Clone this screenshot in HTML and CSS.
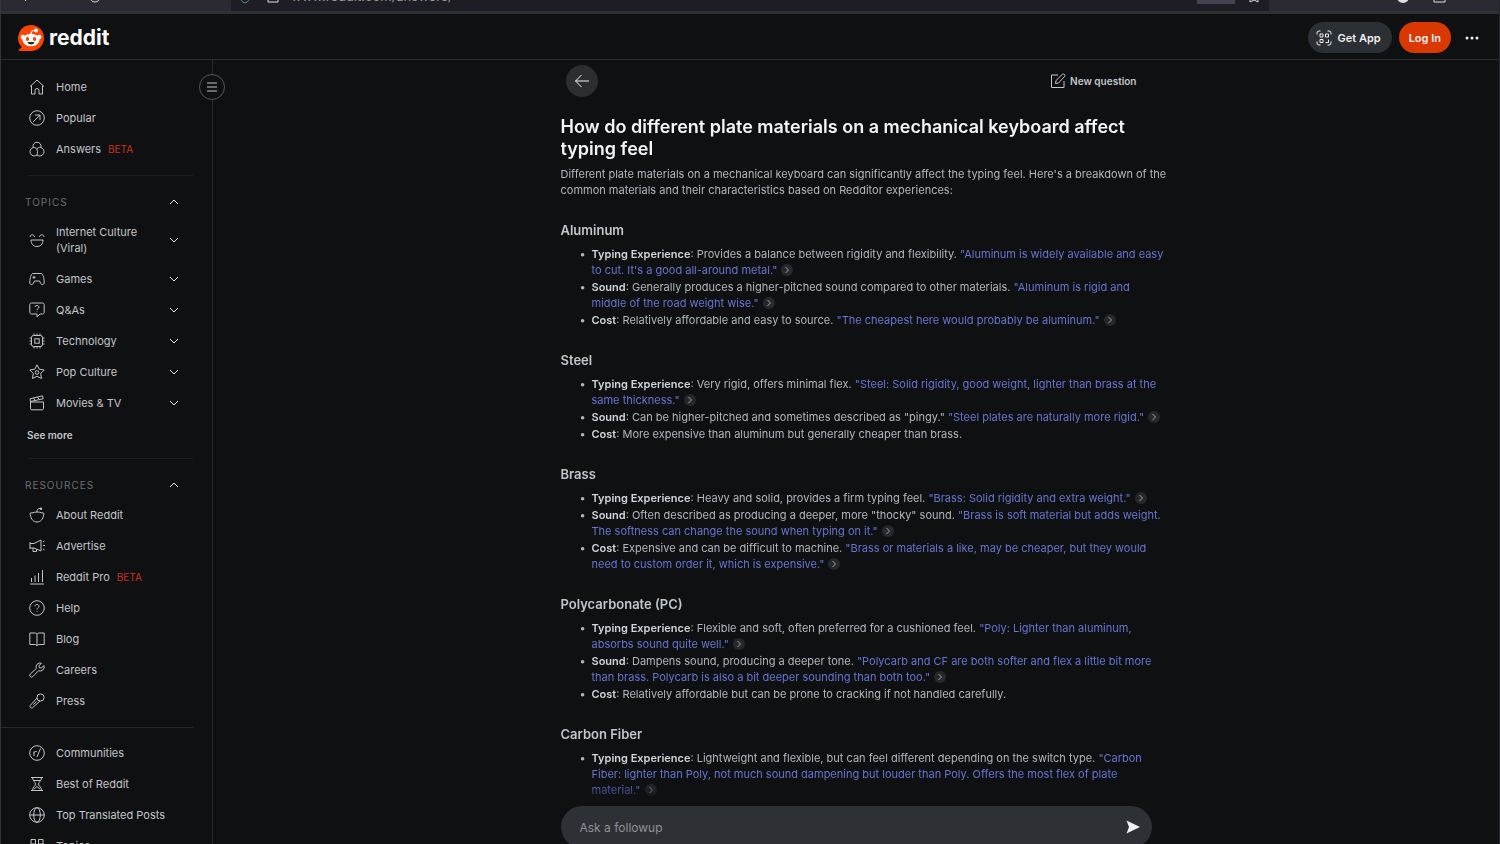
FILE: index.html
```html
<!DOCTYPE html>
<html lang="en">
<head>
    <meta charset="UTF-8">
    <meta name="viewport" content="width=device-width, initial-scale=1.0">
    <title>Reddit Answers</title>
    <link rel="stylesheet" href="styles.css">
</head>
<body>

<!-- Shared icons -->
<svg class="sprite" aria-hidden="true">
    <symbol id="down" viewBox="0 0 12 12"><path d="M2 4l4 4 4-4"/></symbol>
    <symbol id="up" viewBox="0 0 12 12"><path d="M2 8l4-4 4 4"/></symbol>
    <symbol id="next" viewBox="0 0 12 12"><path d="M4.500 3l3 3-3 3"/></symbol>
</svg>

<div class="browser-bar">
    <svg class="browser-icons" viewBox="0 0 110 14" aria-hidden="true">
        <path d="M15-3l4 4M83-3a5 5 0 0 0 10 0"/>
    </svg>
    <div class="address">
        <svg class="address-icons" viewBox="0 0 46 14" aria-hidden="true">
            <path class="shield" d="M5-4c0 4 2 6 5 7 3-1 5-3 5-7"/>
            <path d="M33-4v6h10v-6"/>
        </svg>
        <span class="url">www.reddit.com/answers/</span>
        <span class="zoom-level"></span>
        <svg class="star" viewBox="0 0 14 14" aria-hidden="true"><path d="M3-3v5l4-2 4 2v-5"/></svg>
    </div>
    <svg class="browser-icons browser-icons-right" viewBox="0 0 110 14" aria-hidden="true">
        <circle class="solid" cx="14" cy="-3" r="6"/>
        <path d="M45-4v6h11v-6"/>
    </svg>
</div>

<header class="header">
    <a class="logo" href="#">
        <svg class="logo-mark" viewBox="0 0 26 26" aria-hidden="true">
            <path fill="#ff4500" d="M13 0a13 13 0 1 1 0 26H1.500c-.8 0-1.100-.8-.6-1.300L3.800 22A13 13 0 0 1 13 0z"/>
            <circle cx="4.800" cy="12" r="2.200" fill="#fff"/>
            <circle cx="21.200" cy="12" r="2.200" fill="#fff"/>
            <ellipse cx="13" cy="15" rx="8.500" ry="6.300" fill="#fff"/>
            <path d="M13 9c0-2.500 1.500-3.700 4.500-4" fill="none" stroke="#fff" stroke-width="1.200"/>
            <circle cx="18" cy="5.500" r="1.900" fill="#fff"/>
            <ellipse cx="9.500" cy="14" rx="1.700" ry="2" fill="#ff4500"/>
            <ellipse cx="16.500" cy="14" rx="1.700" ry="2" fill="#ff4500"/>
            <path d="M9.500 17.300c2.300-.5 4.700-.5 7 0-1 3-6 3-7 0z" fill="#222"/>
        </svg>
        <span>reddit</span>
    </a>
    <div class="header-actions">
        <button class="btn btn-app" type="button">
            <svg class="icon" viewBox="0 0 16 16" aria-hidden="true"><path d="M1 4.500V3a2 2 0 0 1 2-2h1.500M11.500 1H13a2 2 0 0 1 2 2v1.500M15 11.500V13a2 2 0 0 1-2 2h-1.500M4.500 15H3a2 2 0 0 1-2-2v-1.500M4 4h3v3H4zM9.500 4h3v3h-3zM4 9.500h3v3H4zM12.500 9.500v3h-3"/></svg>
            Get App
        </button>
        <button class="btn btn-login" type="button">Log In</button>
        <button class="btn-more" type="button" aria-label="More options">
            <svg class="icon" viewBox="0 0 16 16" aria-hidden="true"><g class="solid"><circle cx="3" cy="8" r="1.500"/><circle cx="8" cy="8" r="1.500"/><circle cx="13" cy="8" r="1.500"/></g></svg>
        </button>
    </div>
</header>

<div class="layout">
    <aside class="sidebar">
        <button class="toggle" type="button" aria-label="Collapse navigation">
            <svg class="icon" viewBox="0 0 16 16" aria-hidden="true"><path d="M3 4h10M3 8h10M3 12h10"/></svg>
        </button>
        <nav>
            <ul class="menu">
                <li><a href="#"><svg class="icon" viewBox="0 0 16 16"><path d="M1 7.500L8 1l7 6.500M2.500 6.500V15H6v-3.500a2 2 0 0 1 4 0V15h3.500V6.500"/></svg>Home</a></li>
                <li><a href="#"><svg class="icon" viewBox="0 0 16 16"><circle cx="8" cy="8" r="7.300"/><path d="M4 12l7-7M6 5h5v5"/></svg>Popular</a></li>
                <li><a href="#"><svg class="icon" viewBox="0 0 16 16"><path d="M4.200 6.500a4 4 0 1 1 7.600 0 4.300 4.300 0 1 1-3.800 7.500 4.300 4.300 0 1 1-3.800-7.500zM4.200 6.500C6.500 6 8.500 8 8.500 10.500c0 1.500 0 2.500-.5 3.500M11.800 6.500C10 6 8.500 7 8 8"/></svg>Answers <span class="beta">BETA</span></a></li>
            </ul>
            <hr>
            <button class="group" type="button">TOPICS <svg class="chevron"><use href="#up"/></svg></button>
            <ul class="menu">
                <li><a href="#"><svg class="icon" viewBox="0 0 16 16"><path d="M2 8h12c0 4-2.500 6.500-6 6.500S2 12 2 8zM1 5c.3-3 4-3 4.500 0M10.500 5c.5-3 4.200-3 4.500 0"/></svg><span class="label">Internet Culture (Viral)</span><svg class="chevron"><use href="#down"/></svg></a></li>
                <li><a href="#"><svg class="icon" viewBox="0 0 16 16"><path d="M4 2.500h8c2 0 3 4.500 3.200 8.500.1 3-2.500 3.500-3.700 1L10.500 10h-5L4.500 12C3.300 14.500.7 14 .8 11 1 7 2 2.500 4 2.500zM3.500 6.300h3M5 4.800v3M10.500 5.500v.1M11.500 7v.1"/></svg><span class="label">Games</span><svg class="chevron"><use href="#down"/></svg></a></li>
                <li><a href="#"><svg class="icon" viewBox="0 0 16 16"><path d="M2.500 1h11c1 0 1.700.7 1.700 1.700v7.600c0 1-.7 1.700-1.700 1.700H11l-3 3v-3H2.500C1.500 12 .8 11.300.8 10.300V2.700C.8 1.700 1.500 1 2.500 1zM6 5c0-2.200 4-2 4 .2C10 6.500 8 6.400 8 8M8 9.500v.7"/></svg><span class="label">Q&amp;As</span><svg class="chevron"><use href="#down"/></svg></a></li>
                <li><a href="#"><svg class="icon" viewBox="0 0 16 16"><rect x="2.500" y="2.500" width="11" height="11" rx="2"/><rect x="5.800" y="5.800" width="4.400" height="4.400"/><path d="M5 .5v2M8 .5v2M11 .5v2M5 13.500v2M8 13.500v2M11 13.500v2M.5 5h2M.5 8h2M.5 11h2M13.500 5h2M13.500 8h2M13.500 11h2"/></svg><span class="label">Technology</span><svg class="chevron"><use href="#down"/></svg></a></li>
                <li><a href="#"><svg class="icon" viewBox="0 0 16 16"><path d="M8 .8l2.200 4.400 5 .8-3.500 3.500.8 5L8 12.300l-4.500 2.200.8-5L.8 6l5-.8z"/><circle cx="8" cy="8.500" r="1.800"/></svg><span class="label">Pop Culture</span><svg class="chevron"><use href="#down"/></svg></a></li>
                <li><a href="#"><svg class="icon" viewBox="0 0 16 16"><path d="M1.500 7h13v6.500c0 .8-.5 1.300-1.300 1.300H2.800c-.8 0-1.300-.5-1.300-1.300zM1.500 7L1 3.800 13.500.8l.6 3L1.500 6.500M4.500 3l1.700 2.500M8.500 2l1.700 2.500"/></svg><span class="label">Movies &amp; TV</span><svg class="chevron"><use href="#down"/></svg></a></li>
            </ul>
            <button class="see-more" type="button">See more</button>
            <hr>
            <button class="group" type="button">RESOURCES <svg class="chevron"><use href="#up"/></svg></button>
            <ul class="menu">
                <li><a href="#"><svg class="icon" viewBox="0 0 16 16"><path d="M3 6c3-1.300 7-1.300 10 0 1.500-.8 2.700.8 1.600 2C14 12.500 11.500 15 8 15s-6-2.500-6.600-7C.3 6.800 1.500 5.200 3 6zM8 5c0-2.500.5-3.500 3.500-3.500"/><circle class="solid" cx="12" cy="1.700" r="1.200"/></svg>About Reddit</a></li>
                <li><a href="#"><svg class="icon" viewBox="0 0 16 16"><path d="M1 4v7M1 5.500h4L12 2v11L5 10H1M4 10v3.500h3.500V11M14 4l1.500-1M14 7.500h2M14 11l1.500 1"/></svg>Advertise</a></li>
                <li><a href="#"><svg class="icon" viewBox="0 0 16 16"><path d="M1 15h14M2.500 9v4M6 6.500V13M9.500 4v9M13.500 1v12"/></svg>Reddit Pro <span class="beta">BETA</span></a></li>
                <li><a href="#"><svg class="icon" viewBox="0 0 16 16"><circle cx="8" cy="8" r="7.300"/><path d="M6 6.300c0-2.700 4-2.300 4 0C10 7.700 8 7.600 8 9.500M8 11v.9"/></svg>Help</a></li>
                <li><a href="#"><svg class="icon" viewBox="0 0 16 16"><path d="M8 3.500C8 2.500 7 2 6 2H.8v11.500H6c1 0 2 .5 2 1.500 0-1 1-1.500 2-1.500h5.200V2H10c-1 0-2 .5-2 1.500zM8 3.500V15"/></svg>Blog</a></li>
                <li><a href="#"><svg class="icon" viewBox="0 0 16 16"><path d="M12.500 1.300a4 4 0 0 0-5.200 5.200L1.300 12a1.700 1.700 0 0 0 2.500 2.600l5.800-5.900a4 4 0 0 0 5.300-5.100L12.500 6l-2.300-.3L10 3.500z"/></svg>Careers</a></li>
                <li><a href="#"><svg class="icon" viewBox="0 0 16 16"><circle cx="11.500" cy="4.500" r="3.600"/><path d="M8 5L1.200 12.500c-1 1.200 1 3.200 2.300 2.300L11 8M8 6l2 2M7.500 8.500l-3 3"/></svg>Press</a></li>
            </ul>
            <hr class="wide">
            <ul class="menu">
                <li><a href="#"><svg class="icon" viewBox="0 0 16 16"><circle cx="8" cy="8" r="7.300"/><path d="M5 11V6.500M5 8c.3-1.300 1.300-1.800 2.800-1.500M8 12l3.500-8.500"/></svg>Communities</a></li>
                <li><a href="#"><svg class="icon" viewBox="0 0 16 16"><path d="M2 1.500h12M2 14.500h12M3.500 1.500C3.500 5 6.500 6 6.500 8s-3 3-3 6.500M12.500 1.500C12.500 5 9.500 6 9.500 8s3 3 3 6.500M5 4.500h6M5 13l3-2.500 3 2.500"/></svg>Best of Reddit</a></li>
                <li><a href="#"><svg class="icon" viewBox="0 0 16 16"><circle cx="8" cy="8" r="7.300"/><ellipse cx="8" cy="8" rx="3.300" ry="7.300"/><path d="M.7 8h14.600"/></svg>Top Translated Posts</a></li>
                <li><a href="#"><svg class="icon" viewBox="0 0 16 16"><path d="M2 1.500h4.500V6H2zM9.500 1.500H14V6H9.500zM2 9.500h4.500V14H2zM9.500 9.500H14V14H9.500z"/></svg>Topics</a></li>
            </ul>
        </nav>
    </aside>

    <main class="main">
        <div class="column">
            <div class="toolbar">
                <button class="back" type="button" aria-label="Back">
                    <svg class="icon" viewBox="0 0 16 16" aria-hidden="true"><path d="M15 8H1.500M7.500 2l-6 6 6 6"/></svg>
                </button>
                <button class="new-question" type="button">
                    <svg class="icon" viewBox="0 0 16 16" aria-hidden="true"><path d="M8 2H1.500v12.500H14V8M5.500 10.500l.5-3 6.500-6.300c1.300-1 3.200.8 2.200 2.200L8.500 10z"/></svg>
                    New question
                </button>
            </div>

            <article class="answer">
                <h1>How do different plate materials on a mechanical keyboard affect<br>typing feel</h1>
                <p>Different plate materials on a mechanical keyboard can significantly affect the typing feel. Here's a breakdown of the<br>common materials and their characteristics based on Redditor experiences:</p>

                <h2>Aluminum</h2>
                <ul>
                    <li><b>Typing Experience</b>: Provides a balance between rigidity and flexibility. <a href="#">"Aluminum is widely available and easy<br>to cut. It's a good all-around metal." <svg class="source"><use href="#next"/></svg></a></li>
                    <li><b>Sound</b>: Generally produces a higher-pitched sound compared to other materials. <a href="#">"Aluminum is rigid and<br>middle of the road weight wise." <svg class="source"><use href="#next"/></svg></a></li>
                    <li><b>Cost</b>: Relatively affordable and easy to source. <a href="#">"The cheapest here would probably be aluminum." <svg class="source"><use href="#next"/></svg></a></li>
                </ul>

                <h2>Steel</h2>
                <ul>
                    <li><b>Typing Experience</b>: Very rigid, offers minimal flex. <a href="#">"Steel: Solid rigidity, good weight, lighter than brass at the<br>same thickness." <svg class="source"><use href="#next"/></svg></a></li>
                    <li><b>Sound</b>: Can be higher-pitched and sometimes described as "pingy." <a href="#">"Steel plates are naturally more rigid." <svg class="source"><use href="#next"/></svg></a></li>
                    <li><b>Cost</b>: More expensive than aluminum but generally cheaper than brass.</li>
                </ul>

                <h2>Brass</h2>
                <ul>
                    <li><b>Typing Experience</b>: Heavy and solid, provides a firm typing feel. <a href="#">"Brass: Solid rigidity and extra weight." <svg class="source"><use href="#next"/></svg></a></li>
                    <li><b>Sound</b>: Often described as producing a deeper, more "thocky" sound. <a href="#">"Brass is soft material but adds weight.<br>The softness can change the sound when typing on it." <svg class="source"><use href="#next"/></svg></a></li>
                    <li><b>Cost</b>: Expensive and can be difficult to machine. <a href="#">"Brass or materials a like, may be cheaper, but they would<br>need to custom order it, which is expensive." <svg class="source"><use href="#next"/></svg></a></li>
                </ul>

                <h2>Polycarbonate (PC)</h2>
                <ul>
                    <li><b>Typing Experience</b>: Flexible and soft, often preferred for a cushioned feel. <a href="#">"Poly: Lighter than aluminum,<br>absorbs sound quite well." <svg class="source"><use href="#next"/></svg></a></li>
                    <li><b>Sound</b>: Dampens sound, producing a deeper tone. <a href="#">"Polycarb and CF are both softer and flex a little bit more<br>than brass. Polycarb is also a bit deeper sounding than both too." <svg class="source"><use href="#next"/></svg></a></li>
                    <li><b>Cost</b>: Relatively affordable but can be prone to cracking if not handled carefully.</li>
                </ul>

                <h2>Carbon Fiber</h2>
                <ul>
                    <li><b>Typing Experience</b>: Lightweight and flexible, but can feel different depending on the switch type. <a href="#">"Carbon<br>Fiber: lighter than Poly, not much sound dampening but louder than Poly. Offers the most flex of plate<br>material." <svg class="source"><use href="#next"/></svg></a></li>
                </ul>
            </article>

            <form class="followup">
                <input type="text" placeholder="Ask a followup" aria-label="Ask a followup">
                <button type="submit" aria-label="Send">
                    <svg class="icon" viewBox="0 0 16 16" aria-hidden="true"><path class="solid" d="M1.500 1.500L15 8 1.500 14.500 4 8z"/></svg>
                </button>
            </form>
        </div>
    </main>
</div>

</body>
</html>
```
FILE: styles.css
```css
* {
    box-sizing: border-box;
}
body {
    font-family: Inter, "Liberation Sans", sans-serif;
    font-size: 11px;
    margin: 0;
    height: 100vh;
    overflow: hidden;
    display: flex;
    flex-direction: column;
    background-color: #0f1012;
    color: #c3c6c9;
    border-left: 1px solid #35363a;
    border-right: 1px solid #26272b;
}
button, input {
    font-family: inherit;
    color: inherit;
    background: none;
    border: 0;
    padding: 0;
}
button {
    cursor: pointer;
}
a {
    color: inherit;
    text-decoration: none;
}
ul {
    margin: 0;
    padding: 0;
}
svg {
    fill: none;
    stroke: currentColor;
    flex-shrink: 0;
}
.sprite {
    display: none;
}
.icon {
    width: 16px;
    height: 16px;
    display: block;
}
.solid {
    fill: currentColor;
    stroke: none;
}

/* browser toolbar */
.browser-bar {
    display: flex;
    flex-shrink: 0;
    height: 14px;
    padding-left: 6px;
    background-color: #2b2a33;
    border-bottom: 3px solid #2f2f36;
    overflow: hidden;
    color: #dedee2;
}
.browser-icons {
    width: 110px;
    height: 14px;
}
.browser-icons-right {
    margin-left: 120px;
}
.address {
    display: flex;
    flex: 1;
    margin-left: 114px;
    background-color: #1e1d24;
}
.address-icons {
    width: 46px;
    height: 14px;
    margin-left: 4px;
}
.shield {
    stroke: #4f8f8c;
}
.url {
    flex: 1;
    margin-left: 10px;
    margin-top: -12px;
    font-size: 13px;
    line-height: 16px;
    color: #98989f;
}
.zoom-level {
    width: 38px;
    height: 4px;
    background-color: #44434e;
}
.star {
    width: 14px;
    height: 14px;
    margin: 0 8px 0 12px;
}

/* header */
.header {
    display: flex;
    flex-shrink: 0;
    align-items: center;
    justify-content: space-between;
    height: 46px;
    padding: 2px 19px 0 17px;
    border-bottom: 1px solid #2a2c2f;
}
.logo {
    display: flex;
    align-items: center;
    gap: 5px;
    color: #fff;
    font-size: 21px;
    font-weight: 700;
    line-height: 26px;
}
.logo-mark {
    width: 26px;
    height: 26px;
    stroke: none;
}
.header-actions {
    display: flex;
    align-items: center;
    gap: 7px;
}
.btn {
    display: flex;
    align-items: center;
    gap: 6px;
    height: 31px;
    border-radius: 16px;
    font-size: 11px;
    font-weight: 600;
    color: #eef0f2;
}
.btn-app {
    padding: 0 11px 0 8px;
    background-color: #2c2f33;
}
.btn-login {
    padding: 0 10px;
    background-color: #d93900;
}
.btn-more {
    margin-left: 6px;
    color: #eef0f2;
}

/* sidebar */
.layout {
    display: flex;
    flex: 1;
    min-height: 0;
}
.sidebar {
    position: relative;
    flex-shrink: 0;
    width: 212px;
    padding: 12px 19px 0 0;
    border-right: 1px solid #26282b;
}
.toggle {
    position: absolute;
    top: 14px;
    right: -13px;
    width: 26px;
    height: 26px;
    display: flex;
    align-items: center;
    justify-content: center;
    border: 1px solid #55585c;
    border-radius: 50%;
    background-color: #0f1012;
}
.menu {
    list-style: none;
    padding-left: 28px;
}
.menu a {
    display: flex;
    align-items: center;
    gap: 11px;
    padding: 7px 13px 8px 0;
    line-height: 16px;
}
.label {
    flex: 1;
}
.beta {
    margin-left: -4px;
    font-size: 10px;
    color: #c8321e;
}
.chevron {
    width: 12px;
    height: 12px;
    color: #e4e6e8;
}
.sidebar hr {
    height: 1px;
    margin: 10px 0 10px 27px;
    border: 0;
    background-color: #1c1e20;
}
.sidebar hr.wide {
    margin-left: 0;
    background-color: #26282b;
}
.group {
    display: flex;
    align-items: center;
    justify-content: space-between;
    width: 100%;
    height: 31px;
    padding: 0 13px 0 24px;
    font-size: 10px;
    letter-spacing: 1px;
    color: #6c6f73;
}
.see-more {
    height: 27px;
    margin-top: 2px;
    padding-left: 26px;
    font-size: 10px;
    font-weight: 600;
}

/* answer */
.main {
    flex: 1;
    min-width: 0;
}
.column {
    display: flex;
    flex-direction: column;
    height: 100%;
    max-width: 591px;
    margin: 0 auto;
}
.toolbar {
    display: flex;
    align-items: center;
    justify-content: space-between;
    padding: 5px 15px 19px 5px;
}
.back {
    display: flex;
    align-items: center;
    justify-content: center;
    width: 32px;
    height: 32px;
    border-radius: 50%;
    background-color: #2b2d2f;
    color: #f2f4f5;
}
.new-question {
    display: flex;
    align-items: center;
    gap: 4px;
    font-size: 10px;
    font-weight: 600;
}
.answer {
    flex: 1;
    min-height: 0;
    margin-right: -24px;
    overflow: hidden;
    font-size: 11px;
    line-height: 16px;
    color: #b4b7ba;
    -webkit-mask-image: linear-gradient(to top, transparent, #000 24px);
    mask-image: linear-gradient(to top, transparent, #000 24px);
}
.answer h1 {
    margin: 0 0 6px;
    font-size: 18px;
    font-weight: 600;
    line-height: 22px;
    color: #f2f4f5;
}
.answer p {
    margin: 0;
}
.answer h2 {
    margin: 24px 0 8px;
    font-size: 13px;
    font-weight: 600;
    line-height: 16px;
    color: #c3c6c9;
}
.answer ul {
    padding-left: 31px;
    list-style-type: "•  ";
}
.answer li + li {
    margin-top: 1px;
}
.answer b {
    font-weight: 600;
    color: #d2d5d8;
}
.answer a {
    color: #6875cf;
}
.source {
    width: 12px;
    height: 12px;
    margin-left: 1px;
    vertical-align: -2px;
    border-radius: 50%;
    background-color: #26282b;
    color: #a3a6aa;
}
.followup {
    display: flex;
    flex-shrink: 0;
    align-items: center;
    height: 42px;
    margin-bottom: -4px;
    padding: 0 11px 0 19px;
    border-radius: 21px;
    background-color: #2d3035;
}
.followup input {
    flex: 1;
    min-width: 0;
    height: 100%;
    font-size: 12px;
    outline: none;
}
.followup input::placeholder {
    color: #8f9296;
}
.followup button {
    color: #eef0f2;
}
```
